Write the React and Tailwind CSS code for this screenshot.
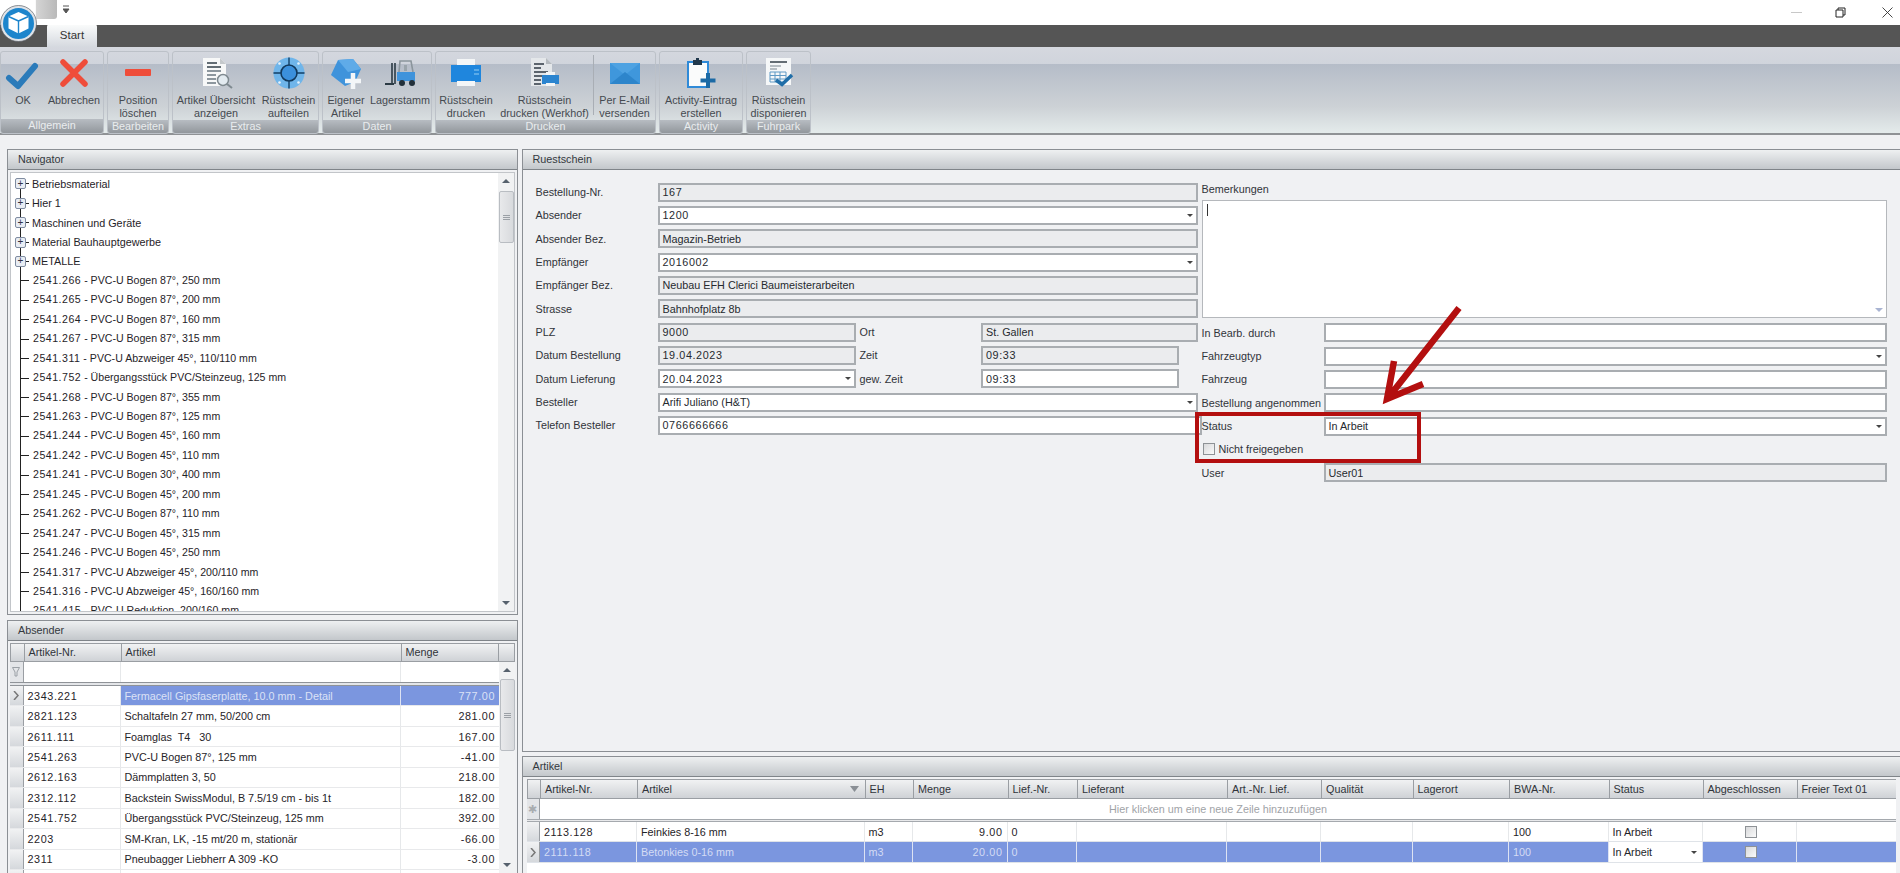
const F = "font-['Liberation_Sans',sans-serif]";

const tree = ["Betriebsmaterial","Hier 1","Maschinen und Geräte","Material Bauhauptgewerbe","METALLE"];
const leaves = [
"2541.266 - PVC-U Bogen 87°, 250 mm","2541.265 - PVC-U Bogen 87°, 200 mm","2541.264 - PVC-U Bogen 87°, 160 mm","2541.267 - PVC-U Bogen 87°, 315 mm",
"2541.311 - PVC-U Abzweiger 45°, 110/110 mm","2541.752 - Übergangsstück PVC/Steinzeug, 125 mm","2541.268 - PVC-U Bogen 87°, 355 mm","2541.263 - PVC-U Bogen 87°, 125 mm",
"2541.244 - PVC-U Bogen 45°, 160 mm","2541.242 - PVC-U Bogen 45°, 110 mm","2541.241 - PVC-U Bogen 30°, 400 mm","2541.245 - PVC-U Bogen 45°, 200 mm",
"2541.262 - PVC-U Bogen 87°, 110 mm","2541.247 - PVC-U Bogen 45°, 315 mm","2541.246 - PVC-U Bogen 45°, 250 mm","2541.317 - PVC-U Abzweiger 45°, 200/110 mm",
"2541.316 - PVC-U Abzweiger 45°, 160/160 mm","2541.415 - PVC-U Reduktion, 200/160 mm"];
const stock = [
["2343.221","Fermacell Gipsfaserplatte, 10.0 mm - Detail","777.00"],["2821.123","Schaltafeln 27 mm, 50/200 cm","281.00"],["2611.111","Foamglas  T4   30","167.00"],
["2541.263","PVC-U Bogen 87°, 125 mm","-41.00"],["2612.163","Dämmplatten 3, 50","218.00"],["2312.112","Backstein SwissModul, B 7.5/19 cm - bis 1t","182.00"],
["2541.752","Übergangsstück PVC/Steinzeug, 125 mm","392.00"],["2203","SM-Kran, LK, -15 mt/20 m, stationär","-66.00"],["2311","Pneubagger Liebherr A 309 -KO","-3.00"],["","",""]];

const Check = () => <svg width="36" height="36" viewBox="0 0 36 36"><path d="M4 23l9 8L30 11" fill="none" stroke="#2b7bba" strokeWidth="6" strokeLinejoin="round" strokeLinecap="round"/></svg>;
const Cross = () => <svg width="36" height="36" viewBox="0 0 36 36"><path d="M7 7l22 22M29 7L7 29" fill="none" stroke="#ef4d3a" strokeWidth="5.5" strokeLinecap="round"/></svg>;
const Minus = () => <svg width="36" height="36" viewBox="0 0 36 36"><rect x="5" y="14" width="26" height="7" rx="1" fill="#ef4d3a"/></svg>;
const DocSearch = () => <svg width="36" height="36" viewBox="0 0 36 36"><path d="M5 3h17l6 6v22H5z" fill="#f7f8f8"/><path d="M22 3v6h6z" fill="#c5c9cc"/><path d="M9 8h10M9 12h14" stroke="#333f48" strokeWidth="1.6"/><path d="M9 16h14M9 20h9M9 24h9M9 28h9" stroke="#6b7780" strokeWidth="1.4"/><circle cx="25" cy="25" r="5.5" fill="#e3ebf0" stroke="#7f8a90" strokeWidth="1.5"/><path d="M29 29l5 4" stroke="#7f8a90" strokeWidth="2"/></svg>;
const Target = () => <svg width="36" height="36" viewBox="0 0 36 36"><circle cx="18" cy="18" r="15.5" fill="#6fb5ea"/><circle cx="18" cy="18" r="8" fill="#3b90dc" stroke="#12395c" strokeWidth="1.6"/><path d="M18 2.5v7.5M18 26v7.5M2.5 18h7.5M26 18h7.5" stroke="#123f66" strokeWidth="1.4"/><g fill="#e6f3fd"><circle cx="8.5" cy="8.5" r="1.3"/><circle cx="27.5" cy="8.5" r="1.3"/><circle cx="8.5" cy="27.5" r="1.3"/><circle cx="27.5" cy="27.5" r="1.3"/></g></svg>;
const Hex = () => <svg width="36" height="36" viewBox="0 0 36 36"><path d="M10 5l15-1 8 10-6 13-10 4L3 20z" fill="#3f93db"/><path d="M10 5l15-1 8 10-13 3z" fill="#5fabe8"/><path d="M17 26h16M25 18v16" stroke="#f3f6f8" strokeWidth="4.5"/></svg>;
const Forklift = () => <svg width="36" height="36" viewBox="0 0 36 36"><path d="M10 8v21M13 8v21" stroke="#2b3a44" strokeWidth="1.6"/><path d="M3 29h9" stroke="#2b3a44" strokeWidth="2"/><path d="M17 17l1-11h11l2 11" fill="none" stroke="#8b959c" strokeWidth="1.6"/><path d="M22 10h3v6h-3z" fill="#9aa4ab"/><path d="M15 17h18v9H15z" fill="#3f93db"/><circle cx="20" cy="28" r="3" fill="#22303a"/><circle cx="30" cy="28" r="3" fill="#22303a"/></svg>;
const Printer = () => <svg width="36" height="36" viewBox="0 0 36 36"><path d="M9 4h18v7H9z" fill="#f4f6f7"/><path d="M3 10h30v17H3z" fill="#1f86dd"/><path d="M26 14h5v2h-5zM26 18h5v2h-5z" fill="#5aaae8"/><path d="M9 26h18v5H9z" fill="#f4f6f7"/></svg>;
const DocPrinter = () => <svg width="36" height="36" viewBox="0 0 36 36"><path d="M4 3h15l6 6v22H4z" fill="#e4e7ea"/><path d="M19 3v6h6z" fill="#b5babf"/><path d="M7 9h10M7 13h7M7 17h14M7 21h11M7 25h7M7 29h7" stroke="#2f3a44" strokeWidth="1.5"/><path d="M15 20h17v9H15z" fill="#2b84cf"/><path d="M19 28h9v3h-9z" fill="#f3f5f6"/><path d="M19 17h9v3h-9z" fill="#f3f5f6"/></svg>;
const Mail = () => <svg width="36" height="36" viewBox="0 0 36 36"><path d="M3 8h30v21H3z" fill="#3f97dc"/><path d="M3 8l15 12L33 8z" fill="#4ea2e2"/><path d="M3 29l15-12 15 12z" fill="#2d85cb"/></svg>;
const Clip = () => <svg width="36" height="36" viewBox="0 0 36 36"><path d="M5 7h20v25H5z" fill="#fafbfb" stroke="#2f8ad8" strokeWidth="2"/><path d="M10 5h9v5h-9z" fill="#20384c"/><path d="M13 3h3v3h-3z" fill="#20384c"/><path d="M25 18v15M17.5 25.5h15" stroke="#1c6aa5" strokeWidth="4"/></svg>;
const Checklist = () => <svg width="36" height="36" viewBox="0 0 36 36"><path d="M5 3h25v27H5z" fill="#f5f7f8"/><path d="M9 7h17" stroke="#333f48" strokeWidth="1.6"/><path d="M9 11h11M9 14h7" stroke="#7a858d" strokeWidth="1.2"/><path d="M9 17h16v10H9zM9 20.5h16M9 24h16M14 17v10M19 17v10" fill="none" stroke="#5f99c4" strokeWidth="1"/><path d="M15 25l6 4.5L31 20" fill="none" stroke="#1f6ea8" strokeWidth="3.5"/></svg>;

function Btn({ Icon, a, b, w }) {
  return (
    <div className={`flex flex-col items-center pt-[3px] ${w}`}>
      <div className="h-[36px] flex items-center justify-center"><Icon /></div>
      <div className="mt-[3px] text-[10.8px] leading-[13px] text-center whitespace-nowrap text-[#454a50]">
        <div>{a}</div><div>{b}</div>
      </div>
    </div>
  );
}

function Group({ label, w, children }) {
  return (
    <div className={`${w} shrink-0 h-[83px] rounded-[3px] border border-[#bcc1c8] flex flex-col overflow-hidden`}>
      <div className="h-[69px] flex items-start">{children}</div>
      <div className="h-[14px] bg-[linear-gradient(180deg,#b7bcc2,#92979c)] text-[10.8px] leading-[13px] text-center text-[#e9ecee]">{label}</div>
    </div>
  );
}

function Panel({ title, className, children }) {
  return (
    <div className={`flex flex-col border border-[#8b8f94] ${className}`}>
      <div className="h-[20px] shrink-0 flex items-center pl-[10px] text-[10.8px] text-[#34393e] border-b border-[#7f8489] bg-[linear-gradient(180deg,#eef0f1,#c3c7cb)]">{title}</div>
      {children}
    </div>
  );
}

const Arrow = () => <svg width="10" height="8" viewBox="0 0 10 8"><path d="M1 6l4-4 4 4z" fill="#56616d"/></svg>;
const ArrowD = ({ c = "#56616d" }) => <svg width="10" height="8" viewBox="0 0 10 8"><path d="M1 2l4 4 4-4z" fill={c}/></svg>;

function VScroll({ thumbH, thumbTop, className = "" }) {
  return (
    <div className={`w-[16px] shrink-0 bg-[#f1f2f3] flex flex-col items-center ${className}`}>
      <div className="h-[16px] flex items-center"><Arrow /></div>
      <div style={{ marginTop: thumbTop, height: thumbH }} className="w-[15px] rounded-[2px] border border-[#b9bdc2] bg-[linear-gradient(90deg,#e8e9eb,#d8dadd)] flex items-center justify-center">
        <div className="w-[7px] h-[5px] border-y border-[#9ba0a6] relative"><div className="h-px mt-[1px] bg-[#9ba0a6]"></div></div>
      </div>
      <div className="flex-1"></div>
      <div className="h-[16px] flex items-center"><ArrowD /></div>
    </div>
  );
}

function Field({ v = "", off, combo, num, className = "" }) {
  return (
    <div className={`h-[19px] border-2 border-[#a9adb1] flex items-center pl-[3px] pr-[2px] text-[10.8px] text-[#262a2f] ${off ? "bg-[#ebecee]" : "bg-white"} ${className}`}>
      <span className={`flex-1 whitespace-nowrap ${num ? "tracking-[0.6px]" : ""}`}>{v}</span>
      {combo && <svg width="7" height="5" viewBox="0 0 7 5"><path d="M0 1h6L3 4z" fill="#444"/></svg>}
    </div>
  );
}

function Row({ label, children, lw = "w-[122px]" }) {
  return (
    <div className="flex items-center h-[19px]">
      <div className={`${lw} shrink-0 text-[10.8px] text-[#30343a] whitespace-nowrap`}>{label}</div>
      {children}
    </div>
  );
}

const HCell = ({ w, children, className = "" }) => (
  <div className={`${w} shrink-0 flex items-center pl-[4px] text-[10.8px] text-[#30343a] whitespace-nowrap border-r border-[#9a9ea3] bg-[linear-gradient(180deg,#f1f2f3,#cfd2d6)] ${className}`}>{children}</div>
);

const Box = () => <div className="w-[12px] h-[12px] border border-[#8e9296] bg-[linear-gradient(135deg,#d8d9db,#fafafa)]"></div>;

const cols = ["w-[97px]","w-[227.5px]","w-[48.5px]","w-[94.5px]","w-[69.5px]","w-[150px]","w-[94px]","w-[91.5px]","w-[96.5px]","w-[99.5px]","w-[94px]","w-[94px]","w-[101px]"];
const heads = ["Artikel-Nr.","Artikel","EH","Menge","Lief.-Nr.","Lieferant","Art.-Nr. Lief.","Qualität","Lagerort","BWA-Nr.","Status","Abgeschlossen","Freier Text 01"];
const rowA = ["2113.128","Feinkies 8-16 mm","m3","9.00","0","","","","","100","In Arbeit","",""];
const rowB = ["2111.118","Betonkies 0-16 mm","m3","20.00","0","","","","","100","In Arbeit","",""];

function GridRow({ data, sel }) {
  return (
    <div className={`flex h-[20.4px] border-b ${sel ? "bg-[#7b96df] border-[#dfe3e8]" : "bg-white border-[#dfe3e8]"}`}>
      <div className="w-[13.5px] shrink-0 bg-[linear-gradient(180deg,#f1f2f3,#d5d8dc)] border-r border-[#9a9ea3] flex items-center justify-center">
        {sel && <svg width="6" height="9" viewBox="0 0 6 9"><path d="M1 0l4 4.5-4 4.5" fill="none" stroke="#777" strokeWidth="1.5"/></svg>}
      </div>
      {data.map((c, i) => (
        <div key={i} className={`${cols[i]} shrink-0 flex items-center border-r text-[10.8px] whitespace-nowrap ${sel ? "border-[#dde3f3] text-[#d4dcf4]" : "border-[#e6e8ea] text-[#1f2328]"} ${i === 3 ? "justify-end pr-[4px]" : "pl-[4px]"} ${i === 0 || i === 3 ? "tracking-[0.6px]" : ""} ${i === 11 ? "justify-center" : ""} ${i === 10 && sel ? "bg-white !text-[#24282c]" : ""}`}>
          {c}
          {i === 10 && sel && <svg className="ml-auto mr-[4px]" width="7" height="5" viewBox="0 0 7 5"><path d="M0 1h6L3 4z" fill="#444"/></svg>}
          {i === 11 && <Box />}
        </div>
      ))}
    </div>
  );
}

export default function App() {
  return (
    <div className={`${F} relative w-[1900px] h-[873px] overflow-hidden flex flex-col bg-[#f0f1f3]`}>
      {/* title bar */}
      <div className="h-[25px] bg-white shrink-0 flex items-center relative">
        <div className="w-[57px] h-[19px] -mt-[6px] bg-[linear-gradient(90deg,#fff_62%,#d4d4d4_64%,#b9b9b9)] rounded-br-[3px]"></div>
        <svg className="ml-[6px] -mt-[7px]" width="7" height="9" viewBox="0 0 7 9"><path d="M0 1h6M0 4h6L3 8z" stroke="#555" fill="#555" strokeWidth="1"/></svg>
        <div className="flex-1"></div>
        <div className="w-[11px] h-px bg-[#c8c8c8] mr-[33px]"></div>
        <svg className="mr-[36px]" width="11" height="11" viewBox="0 0 11 11"><path d="M3 3V1h7v7H8M1 3h7v7H1z" fill="none" stroke="#222" strokeWidth="1"/></svg>
        <svg className="mr-[7px]" width="11" height="11" viewBox="0 0 11 11"><path d="M0.5 0.5l10 10M10.5 0.5l-10 10" stroke="#333" strokeWidth="0.9"/></svg>
      </div>
      {/* tab bar */}
      <div className="h-[22px] bg-[#555555] shrink-0 flex items-end pl-[47px]">
        <div className="w-[50px] h-[23px] rounded-t-[3px] bg-[linear-gradient(180deg,#fbfcfc,#d5d9df)] flex items-center justify-center text-[11.5px] text-[#333]">Start</div>
      </div>
      {/* ribbon */}
      <div className="h-[88px] shrink-0 border-b-2 border-[#8f9295] bg-[linear-gradient(180deg,#d5d8df_0,#d0d4dc_17px,#b5bcc8_17px,#cdd2d6_60px,#e6eded_88px)] flex gap-[3px] pt-[4px]">
        <Group label="Allgemein" w="w-[104px]"><Btn Icon={Check} a="OK" b="" w="w-[44px]" /><Btn Icon={Cross} a="Abbrechen" b="" w="w-[58px]" /></Group>
        <Group label="Bearbeiten" w="w-[62px]"><Btn Icon={Minus} a="Position" b="löschen" w="w-[60px]" /></Group>
        <Group label="Extras" w="w-[147px]"><Btn Icon={DocSearch} a="Artikel Übersicht" b="anzeigen" w="w-[86px]" /><Btn Icon={Target} a="Rüstschein" b="aufteilen" w="w-[59px]" /></Group>
        <Group label="Daten" w="w-[110px]"><Btn Icon={Hex} a="Eigener" b="Artikel" w="w-[46px]" /><Btn Icon={Forklift} a="Lagerstamm" b="" w="w-[62px]" /></Group>
        <Group label="Drucken" w="w-[221px]"><Btn Icon={Printer} a="Rüstschein" b="drucken" w="w-[60px]" /><Btn Icon={DocPrinter} a="Rüstschein" b="drucken (Werkhof)" w="w-[97px]" /><div className="w-px h-[60px] mt-[3px] bg-[#a9aeb5]"></div><Btn Icon={Mail} a="Per E-Mail" b="versenden" w="w-[61px]" /></Group>
        <Group label="Activity" w="w-[84px]"><Btn Icon={Clip} a="Activity-Eintrag" b="erstellen" w="w-[82px]" /></Group>
        <Group label="Fuhrpark" w="w-[65px]"><Btn Icon={Checklist} a="Rüstschein" b="disponieren" w="w-[63px]" /></Group>
      </div>
      {/* content */}
      <div className="flex-1 min-h-0 flex pt-[14px] pl-[7px]">
        {/* left column */}
        <div className="w-[511px] shrink-0 flex flex-col gap-[5px]">
          <Panel title="Navigator" className="h-[466px]">
            <div className="flex-1 min-h-0 flex m-[2px] border border-[#c2c5c9] bg-white overflow-hidden">
              <div className="flex-1 min-w-0 overflow-hidden relative pt-[1px]">
                <div className="absolute left-[9px] top-[8px] bottom-[0] w-px bg-[#222]"></div>
                {tree.map(t => (
                  <div key={t} className="h-[19.45px] flex items-center relative text-[10.8px] text-[#1f2328]">
                    <div className="ml-[4px] w-[11px] h-[11px] rounded-[2px] border border-[#7f8ca0] bg-[#e9edf4] flex items-center justify-center text-[10px] leading-none text-[#334]">+</div>
                    <div className="w-[3px] h-px bg-[#222]"></div>
                    <span className="ml-[3px] whitespace-nowrap">{t}</span>
                  </div>
                ))}
                {leaves.map(t => (
                  <div key={t} className="h-[19.45px] flex items-center relative text-[10.6px] text-[#1f2328]">
                    <div className="ml-[10px] w-[8px] h-px bg-[#222]"></div>
                    <span className="ml-[4px] whitespace-nowrap"><span className="tracking-[0.5px]">{t.slice(0, 8)}</span>{t.slice(8)}</span>
                  </div>
                ))}
              </div>
              <VScroll thumbH={52} thumbTop={2} />
            </div>
          </Panel>
          <Panel title="Absender" className="flex-1 min-h-0 border-b-0">
            <div className="flex-1 min-h-0 flex flex-col mx-[2px] mt-[2px] overflow-hidden">
              <div className="h-[19px] shrink-0 flex border-y border-l border-[#9a9ea3]">
                <HCell w="w-[13.5px]"></HCell><HCell w="w-[97px]">Artikel-Nr.</HCell><HCell w="w-[280px]">Artikel</HCell><HCell w="w-[97px]">Menge</HCell><HCell w="flex-1"></HCell>
              </div>
              <div className="flex-1 min-h-0 flex overflow-hidden">
                <div className="flex-1 min-w-0 flex flex-col bg-white">
                  <div className="h-[20px] shrink-0 flex">
                    <div className="w-[13.5px] shrink-0 bg-[#e3e5e8] border-r border-[#9a9ea3] flex items-center justify-center">
                      <svg width="8" height="10" viewBox="0 0 8 10"><path d="M0.5 0.5h7L5 5v4H3V5z" fill="none" stroke="#9aa0a6"/></svg>
                    </div>
                    <div className="w-[97px] border-r border-[#e6e8ea]"></div><div className="w-[280px] border-r border-[#e6e8ea]"></div>
                  </div>
                  <div className="h-[4px] shrink-0 border-y border-[#8f9398] bg-[#e3e5e8]"></div>
                  {stock.map((r, i) => (
                    <div key={i} className="flex h-[20.45px] shrink-0 border-b border-[#e8e9eb] text-[10.8px]">
                      <div className="w-[13.5px] shrink-0 bg-[linear-gradient(180deg,#f1f2f3,#d5d8dc)] border-r border-[#9a9ea3] flex items-center justify-center">
                        {i === 0 && <svg width="6" height="9" viewBox="0 0 6 9"><path d="M1 0l4 4.5-4 4.5" fill="none" stroke="#777" strokeWidth="1.5"/></svg>}
                      </div>
                      <div className="w-[97px] shrink-0 flex items-center pl-[4px] tracking-[0.6px] text-[#1f2328] border-r border-[#e6e8ea]">{r[0]}</div>
                      <div className={`w-[280px] shrink-0 flex items-center pl-[4px] whitespace-pre border-r ${i === 0 ? "bg-[#7b96df] text-[#dbe2f6] border-[#dde3f3]" : "text-[#1f2328] border-[#e6e8ea]"}`}>{r[1]}</div>
                      <div className={`flex-1 flex items-center justify-end pr-[4px] tracking-[0.6px] ${i === 0 ? "bg-[#7b96df] text-[#dbe2f6]" : "text-[#1f2328]"}`}>{r[2]}</div>
                    </div>
                  ))}
                </div>
                <VScroll thumbH={72} thumbTop={1} />
              </div>
            </div>
          </Panel>
        </div>
        {/* right column */}
        <div className="flex-1 min-w-0 flex flex-col gap-[4px] ml-[3.5px]">
          <Panel title="Ruestschein" className="h-[603px] border-r-0 shrink-0">
            <div className="flex pl-[13px] pt-[12.5px] relative">
              <div className="w-[666px] shrink-0 flex flex-col gap-[4.35px]">
                <Row label="Bestellung-Nr."><Field v="167" num off className="w-[540px]" /></Row>
                <Row label="Absender"><Field v="1200" num combo className="w-[540px]" /></Row>
                <Row label="Absender Bez."><Field v="Magazin-Betrieb" off className="w-[540px]" /></Row>
                <Row label="Empfänger"><Field v="2016002" num combo className="w-[540px]" /></Row>
                <Row label="Empfänger Bez."><Field v="Neubau EFH Clerici Baumeisterarbeiten" off className="w-[540px]" /></Row>
                <Row label="Strasse"><Field v="Bahnhofplatz 8b" off className="w-[540px]" /></Row>
                <Row label="PLZ"><Field v="9000" num off className="w-[198px]" /><div className="w-[125.5px] shrink-0 pl-[4px] text-[10.8px] text-[#30343a]">Ort</div><Field v="St. Gallen" off className="w-[216.5px]" /></Row>
                <Row label="Datum Bestellung"><Field v="19.04.2023" num off className="w-[198px]" /><div className="w-[125.5px] shrink-0 pl-[4px] text-[10.8px] text-[#30343a]">Zeit</div><Field v="09:33" num off className="w-[198px]" /></Row>
                <Row label="Datum Lieferung"><Field v="20.04.2023" num combo className="w-[198px]" /><div className="w-[125.5px] shrink-0 pl-[4px] text-[10.8px] text-[#30343a]">gew. Zeit</div><Field v="09:33" num className="w-[198px]" /></Row>
                <Row label="Besteller"><Field v="Arifi Juliano (H&T)" combo className="w-[540px]" /></Row>
                <Row label="Telefon Besteller"><Field v="0766666666" num className="w-[546px]" /></Row>
              </div>
              <div className="flex-1 min-w-0 flex flex-col gap-[4.35px] pr-[13px]">
                <div className="h-[16px] text-[10.8px] leading-[14px] text-[#30343a] -mt-[1px]">Bemerkungen</div>
                <div className="h-[118px] -mt-[2px] mb-[1px] border border-[#b5b8bc] bg-white flex">
                  <div className="flex-1"><div className="w-px h-[12px] mt-[3px] ml-[4px] bg-[#333]"></div></div>
                  <div className="w-[14px] flex flex-col items-center justify-between py-[3px]"><div></div><ArrowD c="#a9b4d2" /></div>
                </div>
                <Row label="In Bearb. durch"><Field className="flex-1" /></Row>
                <Row label="Fahrzeugtyp"><Field combo className="flex-1" /></Row>
                <Row label="Fahrzeug"><Field className="flex-1" /></Row>
                <Row label="Bestellung angenommen"><Field className="flex-1" /></Row>
                <Row label="Status"><Field v="In Arbeit" combo className="flex-1" /></Row>
                <div className="h-[19px] flex items-center text-[10.8px] text-[#30343a]"><div className="mr-[4px] ml-[1px]"><Box /></div>Nicht freigegeben</div>
                <Row label="User"><Field v="User01" off className="flex-1" /></Row>
              </div>
              {/* annotation */}
              <div className="absolute left-[672px] top-[242px] w-[226px] h-[51px] border-[4px] border-[#b30f0f]"></div>
              <svg className="absolute left-[855px] top-[135px]" width="90" height="125" viewBox="0 0 90 125">
                <path d="M81 3L10 93M16 56L9 94L45 79" fill="none" stroke="#b30f0f" strokeWidth="6.5" strokeLinejoin="miter"/>
              </svg>
            </div>
          </Panel>
          <Panel title="Artikel" className="flex-1 min-h-0 border-r-0 border-b-0">
            <div className="flex-1 min-h-0 flex flex-col mx-[4px] mt-[2px] bg-white overflow-hidden">
              <div className="h-[20px] shrink-0 flex border-y border-l border-[#9a9ea3]">
                <HCell w="w-[13.5px]"></HCell>
                {heads.map((h, i) => (
                  <HCell key={h} w={cols[i]}>
                    {h}
                    {i === 1 && <svg className="ml-auto mr-[6px]" width="9" height="6" viewBox="0 0 9 6"><path d="M0 0h9L4.5 6z" fill="#8a8f95"/></svg>}
                  </HCell>
                ))}
              </div>
              <div className="h-[20px] shrink-0 flex">
                <div className="w-[13.5px] shrink-0 bg-[#e3e5e8] border-r border-[#9a9ea3] flex items-center justify-center text-[11px] text-[#a8acb0]">✱</div>
                <div className="flex-1 flex items-center justify-center text-[10.8px] text-[#9fa3a7]">Hier klicken um eine neue Zeile hinzuzufügen</div>
              </div>
              <div className="h-[3px] shrink-0 border-y border-[#a5a9ae] bg-[#e8e9eb]"></div>
              <GridRow data={rowA} />
              <GridRow data={rowB} sel />
            </div>
          </Panel>
        </div>
      </div>
      {/* application logo */}
      <svg className="absolute left-0 top-[5px]" width="37" height="37" viewBox="0 0 37 37">
        <circle cx="18.5" cy="18.5" r="18" fill="#dfe3e8" stroke="#4a4f55" strokeWidth="0.6"/>
        <circle cx="18.5" cy="18.5" r="15.5" fill="#1d85cc"/>
        <path d="M18.5 7l10 4.5v12l-10 5-10-5v-12z" fill="#fff"/>
        <path d="M18.5 16l10-4.5M18.5 16l-10-4.5M18.5 16v13" stroke="#1d85cc" strokeWidth="1.4" fill="none"/>
      </svg>
    </div>
  );
}
